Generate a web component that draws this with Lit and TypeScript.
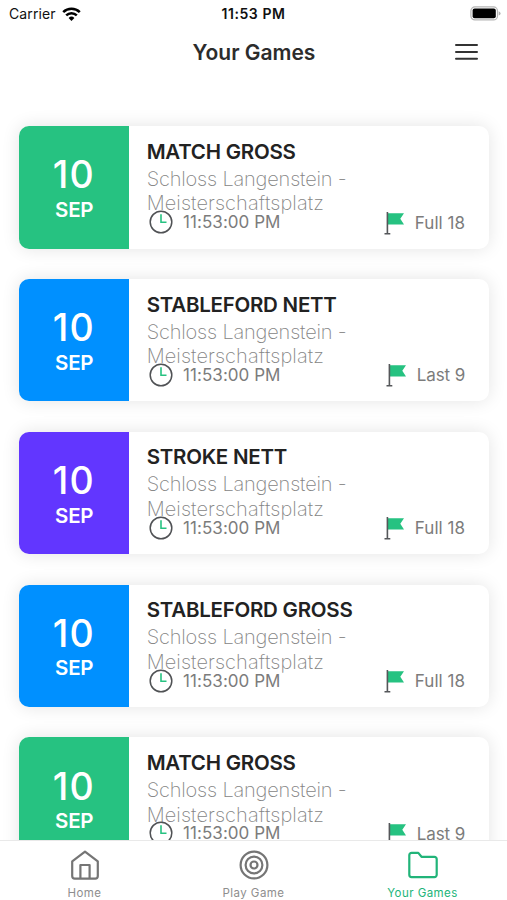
import { LitElement, html, css, svg } from "lit";
import { customElement, property } from "lit/decorators.js";

interface Game {
  tone: string;
  title: string;
  holes: string;
}

const GAMES: Game[] = [
  { tone: "green", title: "MATCH GROSS", holes: "Full 18" },
  { tone: "blue", title: "STABLEFORD NETT", holes: "Last 9" },
  { tone: "violet", title: "STROKE NETT", holes: "Full 18" },
  { tone: "blue", title: "STABLEFORD GROSS", holes: "Full 18" },
  { tone: "green", title: "MATCH GROSS", holes: "Last 9" },
];

const ICONS = {
  home: svg`<path d="M2.2 11.3 L15 1.6 L27.8 11.3 V26 a2.6 2.6 0 0 1 -2.6 2.6 H4.8 A2.6 2.6 0 0 1 2.2 26 Z M10.4 28 V15 H19.6 V28"/>`,
  target: svg`<circle cx="15" cy="15" r="13.4"/><circle cx="15" cy="15" r="8.4"/><circle cx="15" cy="15" r="3.5"/>`,
  folder: svg`<path d="M1.3 5.2 A2.3 2.3 0 0 1 3.6 2.9 H10.3 L13.5 6.8 H26.4 A2.3 2.3 0 0 1 28.7 9.1 V24.8 A2.3 2.3 0 0 1 26.4 27.1 H3.6 A2.3 2.3 0 0 1 1.3 24.8 Z"/>`,
};

@customElement("status-bar")
class StatusBar extends LitElement {
  static styles = css`
    :host { display: grid; grid-template-columns: 1fr auto 1fr; align-items: center; height: 27px; padding: 0 6px 0 9px; color: #111; }
    .carrier { display: flex; align-items: center; gap: 6px; font-size: 14px; letter-spacing: 0.1px; }
    .time { font-size: 14px; font-weight: 600; letter-spacing: 0.55px; margin-right: 3px; }
    .battery { justify-self: end; }
    svg { display: block; }
  `;
  render() {
    return html`
      <div class="carrier">
        <span>Carrier</span>
        <svg width="19" height="14" viewBox="0 0 19 14">
          <g fill="none" stroke="#000" stroke-width="2.5">
            <path d="M1.2 5.2 A11.8 11.8 0 0 1 17.8 5.2"/>
            <path d="M4.2 8.4 A7.5 7.5 0 0 1 14.8 8.4"/>
          </g>
          <path d="M9.5 14 L6.6 10.9 A4.2 4.2 0 0 1 12.4 10.9 Z"/>
        </svg>
      </div>
      <span class="time">11:53 PM</span>
      <svg class="battery" width="31" height="15" viewBox="0 0 31 15">
        <rect x="0.9" y="0.9" width="26.6" height="13" rx="4" fill="#fff" stroke="#b5b5b5" stroke-width="1.2"/>
        <rect x="2.6" y="2.6" width="23.2" height="9.6" rx="2" fill="#000"/>
        <path d="M28.7 5.2 Q30.6 6 30.6 7.4 Q30.6 8.8 28.7 9.6 Z" fill="#b0b0b0"/>
      </svg>`;
  }
}

@customElement("game-card")
class GameCard extends LitElement {
  @property({ attribute: false }) game!: Game;
  static styles = css`
    :host { display: block; }
    .card { display: flex; height: 122.4px; border-radius: 10px; background: #fff; box-shadow: 0 0 18px rgba(0, 0, 0, 0.11); }
    .date { width: 110.3px; flex: none; box-sizing: border-box; border-radius: 10px 0 0 10px; color: #fff; display: flex; flex-direction: column; align-items: center; padding-top: 26.3px; }
    .green { background: #26c281; }
    .blue { background: #0090ff; }
    .violet { background: #6236ff; }
    .day { font-size: 37.5px; line-height: 46px; font-weight: 500; letter-spacing: 1.2px; margin-right: 0.4px; }
    .month { margin-top: -0.5px; font-size: 20.5px; line-height: 24px; font-weight: 600; letter-spacing: -0.3px; }
    .body { flex: 1; min-width: 0; padding: 12.7px 23.4px 0 17.4px; }
    .title { font-size: 20.5px; line-height: 26px; font-weight: 600; color: #222; letter-spacing: -0.25px; white-space: nowrap; }
    .course { font-size: 20px; line-height: 24.6px; height: 42.3px; margin-top: 2px; font-weight: 200; color: #858585; white-space: nowrap; }
    .course span { display: block; }
    .first { letter-spacing: -0.18px; }
    .second { letter-spacing: 0.08px; }
    .meta { display: flex; justify-content: space-between; height: 26px; font-size: 17px; line-height: 26px; color: #7c7c7c; white-space: nowrap; }
    .when, .holes { display: flex; align-items: center; }
    .when { gap: 10.4px; padding-left: 2px; letter-spacing: 0.05px; }
    .holes { gap: 10px; padding-top: 1px; letter-spacing: 0.05px; }
    .holes.short { letter-spacing: -0.1px; }
    svg { display: block; }
  `;
  render() {
    const g = this.game;
    return html`
      <div class="card">
        <div class="date ${g.tone}"><span class="day">10</span><span class="month">SEP</span></div>
        <div class="body">
          <div class="title">${g.title}</div>
          <div class="course"><span class="first">Schloss Langenstein -</span><span class="second">Meisterschaftsplatz</span></div>
          <div class="meta">
            <div class="when">
              <svg width="24" height="24" viewBox="0 0 24 24" fill="none">
                <circle cx="12" cy="12" r="10.8" stroke="#505255" stroke-width="1.5"/>
                <path d="M12 4.3 V12.2 H17.5" stroke="#26c281" stroke-width="1.6"/>
              </svg>
              <span>11:53:00 PM</span>
            </div>
            <div class="holes ${g.holes === "Last 9" ? "short" : ""}">
              <svg width="21" height="24" viewBox="0 0 21 24">
                <path d="M3.5 2.3 H20 L16.3 7.8 L20 13.5 H3.5 Z" fill="#26c281"/>
                <path d="M3.4 1 V22.6 M0.5 22.8 H6.3" fill="none" stroke="#55575a" stroke-width="1.6"/>
              </svg>
              <span>${g.holes}</span>
            </div>
          </div>
        </div>
      </div>`;
  }
}

@customElement("tab-bar")
class TabBar extends LitElement {
  static styles = css`
    :host { display: grid; grid-template-columns: repeat(3, 1fr); height: 60px; box-sizing: border-box; border-top: 1px solid #e9e9e9; background: #fff; }
    .tab { display: flex; flex-direction: column; align-items: center; padding-top: 8.5px; color: #757575; }
    .icon { display: block; fill: none; stroke: currentColor; stroke-width: 2.2; stroke-linejoin: round; }
    .label { margin-top: 6.2px; font-size: 11.5px; line-height: 15px; letter-spacing: 0.45px; color: #8e8e8e; }
    .active, .active .label { color: #21b479; }
  `;
  render() {
    const tab = (icon: unknown, label: string, active = false) => html`
      <div class="tab ${active ? "active" : ""}">
        <svg class="icon" width="30" height="30" viewBox="0 0 30 30">${icon}</svg>
        <span class="label">${label}</span>
      </div>`;
    return html`${tab(ICONS.home, "Home")}${tab(ICONS.target, "Play Game")}${tab(ICONS.folder, "Your Games", true)}`;
  }
}

@customElement("app-root")
class AppRoot extends LitElement {
  static styles = css`
    :host { display: flex; flex-direction: column; height: 900px; overflow: hidden; background: #fff; font-family: Inter, "Liberation Sans", sans-serif; }
    .header { display: grid; grid-template-columns: 1fr auto 1fr; align-items: center; height: 50px; padding-right: 29px; padding-left: 30px; flex: none; }
    .heading { grid-column: 2; font-size: 21px; font-weight: 600; color: #2c2c2c; letter-spacing: 0; }
    .menu { justify-self: end; display: block; }
    .list { flex: 1; min-height: 0; overflow: hidden; padding: 49.2px 18.5px 0 19px; display: flex; flex-direction: column; gap: 30.4px; }
    game-card { flex: none; }
    tab-bar, status-bar { flex: none; }
  `;
  render() {
    return html`
      <status-bar></status-bar>
      <div class="header">
        <span class="heading">Your Games</span>
        <svg class="menu" width="23" height="18" viewBox="0 0 23 18">
          <path d="M1 2.1 H22 M1 9 H22 M1 15.7 H22" stroke="#333" stroke-width="2" stroke-linecap="round"/>
        </svg>
      </div>
      <div class="list">${GAMES.map((g) => html`<game-card .game=${g}></game-card>`)}</div>
      <tab-bar></tab-bar>`;
  }
}
